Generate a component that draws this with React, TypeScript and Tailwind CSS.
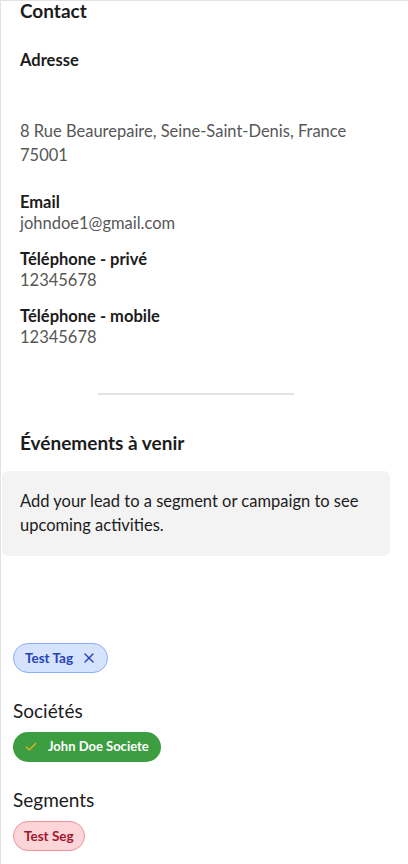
import { X, Check } from 'lucide-react';

const FIELDS = [
  { label: 'Email', value: 'johndoe1@gmail.com' },
  { label: 'Téléphone - privé', value: '12345678' },
  { label: 'Téléphone - mobile', value: '12345678' },
];

export default function App() {
  return (
    <div
      className="min-h-[864px] bg-white border-l border-t border-[#e3e3e3] text-[#1c1c1c]"
      style={{ fontFamily: 'Lato, "Noto Sans", sans-serif' }}>
      <section className="px-[19px]">
        <h2 className="text-[19px] font-bold leading-[19px]">Contact</h2>

        <div className="mt-[29px]">
          <h3 className="text-[16.5px] font-bold leading-[22px]">Adresse</h3>
          <div className="h-[48px]" />
          <p className="text-[16.5px] leading-[24px] text-[#575757]">
            8 Rue Beaurepaire, Seine-Saint-Denis, France
            <br />
            75001
          </p>
        </div>

        <div className="mt-[24px] flex flex-col gap-[14px]">
          {FIELDS.map(f => (
            <div key={f.label}>
              <h3 className="text-[16.5px] font-bold leading-[22px]">{f.label}</h3>
              <p className="text-[16.5px] leading-[21px] text-[#575757]">{f.value}</p>
            </div>
          ))}
        </div>
      </section>

      <div className="mt-[45px] ml-[97px] w-[196px] h-[2px] bg-[#e2e2e2]" />

      <section className="mt-[35px]">
        <h2 className="px-[19px] text-[19px] font-bold leading-[26px]">
          Événements à venir
        </h2>
        <div className="mt-[15px] ml-px mr-[18px] rounded-[6px] bg-[#f3f3f3] px-[18px] pt-[18px] pb-[19px]">
          <p className="text-[16.5px] leading-[24px] text-[#1c1c1c]">
            Add your lead to a segment or campaign to see upcoming activities.
          </p>
        </div>
      </section>

      <section className="px-[12px] mt-[87px] flex flex-col items-start">
        <span className="flex items-center gap-[8px] h-[30px] pl-[11px] pr-[10px] rounded-full border border-[#8aaef7] bg-[#d6e3fe] text-[#2643b8] text-[13.5px] font-bold">
          Test Tag
          <X size={16} strokeWidth={2} />
        </span>

        <h3 className="mt-[26px] text-[19px] leading-[24px] text-[#1c1c1c]">Sociétés</h3>
        <span className="mt-[9px] flex items-center gap-[10px] h-[30px] pl-[11px] pr-[12px] rounded-full bg-[#3c9e41] text-white text-[13px] font-bold">
          <Check size={14} strokeWidth={2.2} className="text-[#f0b429]" />
          John Doe Societe
        </span>

        <h3 className="mt-[26px] text-[19px] leading-[24px] text-[#1c1c1c]">Segments</h3>
        <span className="mt-[9px] flex items-center h-[30px] px-[10px] rounded-full border border-[#f19299] bg-[#fcd5d9] text-[#a0182c] text-[13.5px] font-bold">
          Test Seg
        </span>
      </section>
    </div>
  );
}
